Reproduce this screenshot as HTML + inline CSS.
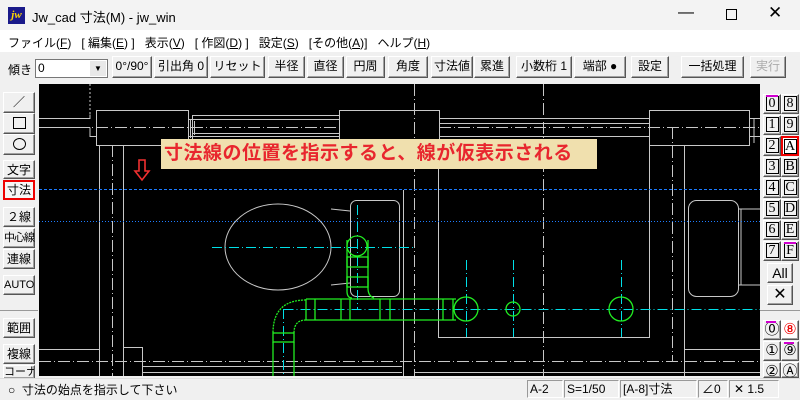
<!DOCTYPE html>
<html><head><meta charset="utf-8"><style>
*{margin:0;padding:0;box-sizing:border-box}
body{width:800px;height:400px;overflow:hidden;background:#f0f0f0;font-family:"Liberation Sans","Noto Sans CJK JP",sans-serif;position:relative;font-size:12px;color:#000}
.abs{position:absolute}
.btn{position:absolute;background:#f0f0f0;border:1px solid;border-color:#fff #555 #555 #fff;box-shadow:inset -1px -1px #a0a0a0;text-align:center;font-size:12px;white-space:nowrap;line-height:19px}
.lb{left:3px;width:32px}
.rb{width:18px;height:20px;font-family:"Liberation Serif",serif;font-size:14px;line-height:18px}
.rb span{display:inline-block;border:1px solid #000;width:13px;height:15px;line-height:14px;margin-top:1px}
</style></head><body>
<div class="abs" style="left:0;top:0;width:800px;height:30px;background:#f3f3f3"></div>
<div class="abs" style="left:8px;top:7px;width:17px;height:17px;background:#1a1a8a;color:#ffd800;font:bold italic 11px 'Liberation Serif',serif;line-height:16px;text-align:center">jw</div>
<div class="abs" style="left:32px;top:7px;font-size:13px">Jw_cad 寸法(M) - jw_win</div>
<div class="abs" style="left:678px;top:4px;font-size:16px">—</div>
<div class="abs" style="left:726px;top:9px;width:11px;height:11px;border:1px solid #000"></div>
<div class="abs" style="left:768px;top:3px;font-size:17px">✕</div>
<div class="abs" style="left:0;top:30px;width:800px;height:22px;background:#fff"></div>
<div class="abs" style="left:8px;top:34px;font-size:12px;word-spacing:0">ファイル(<u>F</u>)&nbsp;&nbsp;&nbsp;[ 編集(<u>E</u>) ]&nbsp;&nbsp;&nbsp;表示(<u>V</u>)&nbsp;&nbsp;&nbsp;[ 作図(<u>D</u>) ]&nbsp;&nbsp;&nbsp;設定(<u>S</u>)&nbsp;&nbsp;&nbsp;[その他(<u>A</u>)]&nbsp;&nbsp;&nbsp;ヘルプ(<u>H</u>)</div>
<div class="abs" style="left:8px;top:61px">傾き</div>
<div class="abs" style="left:35px;top:59px;width:73px;height:19px;background:#fff;border:1px solid #777;padding-left:2px;line-height:16px">0<span style="position:absolute;right:1px;top:1px;width:16px;height:15px;background:#e8e8e8;font-size:8px;line-height:15px;text-align:center">▼</span></div>
<div class="btn" style="left:112px;top:56px;width:40px;height:22px">0°/90°</div>
<div class="btn" style="left:154px;top:56px;width:54px;height:22px">引出角 0</div>
<div class="btn" style="left:210px;top:56px;width:55px;height:22px">リセット</div>
<div class="btn" style="left:268px;top:56px;width:37px;height:22px">半径</div>
<div class="btn" style="left:307px;top:56px;width:37px;height:22px">直径</div>
<div class="btn" style="left:346px;top:56px;width:39px;height:22px">円周</div>
<div class="btn" style="left:388px;top:56px;width:40px;height:22px">角度</div>
<div class="btn" style="left:431px;top:56px;width:42px;height:22px">寸法値</div>
<div class="btn" style="left:474px;top:56px;width:36px;height:22px">累進</div>
<div class="btn" style="left:516px;top:56px;width:56px;height:22px">小数桁 1</div>
<div class="btn" style="left:574px;top:56px;width:52px;height:22px">端部 ●</div>
<div class="btn" style="left:631px;top:56px;width:38px;height:22px">設定</div>
<div class="btn" style="left:681px;top:56px;width:63px;height:22px">一括処理</div>
<div class="btn" style="left:750px;top:56px;width:36px;height:22px;color:#aaa">実行</div>

<!-- left toolbar -->
<div class="btn lb" style="top:92px;height:21px">／</div>
<div class="btn lb" style="top:113px;height:21px"><span style="display:inline-block;width:13px;height:12px;border:1px solid #000;margin-top:3px"></span></div>
<div class="btn lb" style="top:134px;height:21px"><span style="display:inline-block;width:13px;height:12px;border:1px solid #000;border-radius:50%;margin-top:3px"></span></div>
<div class="btn lb" style="top:160px;height:19px">文字</div>
<div class="btn lb" style="top:180px;height:20px;border:2px solid #e00;box-shadow:none;line-height:16px;background:#f6f6f6">寸法</div>
<div class="btn lb" style="top:207px;height:20px">２線</div>
<div class="btn lb" style="top:228px;height:20px;font-size:11px;letter-spacing:-1px">中心線</div>
<div class="btn lb" style="top:249px;height:20px">連線</div>
<div class="btn lb" style="top:275px;height:20px;font-size:11px">AUTO</div>
<div class="abs" style="left:0;top:310px;width:38px;border-top:1px solid #999"></div>
<div class="btn lb" style="top:318px;height:20px">範囲</div>
<div class="btn lb" style="top:344px;height:20px">複線</div>
<div class="btn lb" style="top:365px;height:14px;line-height:13px;overflow:hidden;font-size:11px">コーナー</div>

<!-- canvas -->
<svg class="abs" style="left:39px;top:84px" width="721" height="292" viewBox="39 84 721 292">
<rect x="39" y="84" width="721" height="292" fill="#000"/>
<g stroke="#c8c8c8" stroke-width="1" fill="none">
<path d="M90 84v30" stroke-dasharray="2 2"/>
<path d="M39 118.5h51v-4M39 127.5h51M90 127.5v9h6"/>
<rect x="96.5" y="110.5" width="92" height="35"/>
<path d="M99.5 145v231M123.5 145v231"/>
<path d="M188 119.5h151M188 136.5h151M192 115.5h147M192 133.5h147M190.5 119v19M194.5 121v14M192.5 115v24"/>
<rect x="339.5" y="110.5" width="100" height="29"/>
<path d="M439 118.5h210M439 123.5h210M439 136.5h210"/>
<rect x="649.5" y="110.5" width="100" height="35"/>
<path d="M649.5 145v192.5H438.5V139M684.5 145.5V376M684 349.5h76M749 118.5h11M749 136.5h11M754 118v25"/>
<path d="M403.5 190v186M39 349.5h60M123 347.5h19M142.5 347v29M142 366.5h260M142 372.5h260M415 372.5h345"/>
<rect x="688.5" y="200.5" width="50" height="96" rx="8"/>
<path d="M738 209h22M738 285h22M741 209v76"/>
<ellipse cx="278" cy="247" rx="53" ry="43"/>
<path d="M331 209l19 2M331 285l19 -2"/>
<rect x="350.5" y="200.5" width="49" height="96" rx="6"/>
</g>
<g stroke="#c8c8c8" stroke-width="1" fill="none" stroke-dasharray="12 3 1 3">
<path d="M39 127.5h300M439 127.5h321M39 361.5h721M112.5 145v231M414.5 84v292M543.5 84v292M672.5 127v235"/>
</g>
<path d="M39 189.5h721" stroke="#1e7cff" stroke-width="1" stroke-dasharray="3 2"/>
<path d="M39 221.5h721" stroke="#1e7cff" stroke-width="1" stroke-dasharray="1 2"/>
<g stroke="#00e0e8" stroke-width="1" stroke-dasharray="10 3 1 3" fill="none">
<path d="M212 247.5h202M357.5 205v104M283.5 309.5h477M466.5 260v77M513.5 260v77M621.5 260v77M283.5 309v67"/>
</g>
<g stroke="#22ee22" stroke-width="1.3" fill="none">
<circle cx="357" cy="246" r="10"/>
<rect x="347" y="257" width="21" height="10"/>
<rect x="347" y="277" width="21" height="10"/>
<path d="M347 240v51q0 7 5 7M368 240v48q0 8 6 10"/>
<path d="M306 299h150M306 320h150M306 299v21M315 299v21M341 299v21M350 299v21M380 299v21M390 299v21M443 299v21M453 299v21"/>
<path d="M306 300q-33 0-33 33M306 320q-12 0-12 13" stroke-dasharray="2 1"/>
<rect x="273" y="333" width="21" height="9"/>
<path d="M273 342v34M294 342v34"/>
<circle cx="466" cy="309" r="12"/>
<circle cx="513" cy="309" r="7"/>
<circle cx="621" cy="309" r="12"/>
</g>
<path d="M139 160h6v11h4l-7 9-7-9h4z" fill="none" stroke="#f03030" stroke-width="1.6"/>
</svg>
<div class="abs" style="left:161px;top:139px;width:436px;height:30px;background:#f0e0ae;color:#e8262e;font-weight:bold;font-size:19px;line-height:30px;padding-left:3px;letter-spacing:0.5px;white-space:nowrap">寸法線の位置を指示すると、線が仮表示される</div>

<!-- right panel -->
<div class="abs" style="left:760px;top:84px;width:40px;height:294px;background:#f0f0f0"></div>
<div class="btn rb" style="left:763px;top:94px"><span>0</span></div><div class="btn rb" style="left:781px;top:94px"><span>8</span></div>
<div class="abs" style="left:766px;top:95px;width:12px;height:2px;background:#d000d0"></div>
<div class="btn rb" style="left:763px;top:115px"><span>1</span></div><div class="btn rb" style="left:781px;top:115px"><span>9</span></div>
<div class="btn rb" style="left:763px;top:136px"><span>2</span></div><div class="btn rb" style="left:781px;top:136px;border:2px solid #e00;box-shadow:none;background:#fff"><span style="margin-top:0">A</span></div>
<div class="btn rb" style="left:763px;top:157px"><span>3</span></div><div class="btn rb" style="left:781px;top:157px"><span>B</span></div>
<div class="btn rb" style="left:763px;top:178px"><span>4</span></div><div class="btn rb" style="left:781px;top:178px"><span>C</span></div>
<div class="btn rb" style="left:763px;top:199px"><span>5</span></div><div class="btn rb" style="left:781px;top:199px"><span>D</span></div>
<div class="btn rb" style="left:763px;top:220px"><span>6</span></div><div class="btn rb" style="left:781px;top:220px"><span>E</span></div>
<div class="btn rb" style="left:763px;top:241px"><span>7</span></div><div class="btn rb" style="left:781px;top:241px"><span>F</span></div>
<div class="abs" style="left:784px;top:242px;width:12px;height:2px;background:#d000d0"></div>
<div class="btn" style="left:767px;top:263px;width:26px;height:20px;font-size:14px;line-height:18px">All</div>
<div class="btn" style="left:767px;top:285px;width:26px;height:20px;font-size:16px;line-height:18px">✕</div>
<div class="abs" style="left:760px;top:310px;width:40px;border-top:1px solid #999"></div>
<div class="btn rb" style="left:763px;top:320px;font-size:15px">⓪</div><div class="btn rb" style="left:781px;top:320px;font-size:15px;color:#e00;background:#fff">⑧</div>
<div class="btn rb" style="left:763px;top:341px;font-size:15px">①</div><div class="btn rb" style="left:781px;top:341px;font-size:15px">⑨</div>
<div class="btn rb" style="left:763px;top:362px;font-size:15px;height:16px;overflow:hidden">②</div><div class="btn rb" style="left:781px;top:362px;font-size:15px;height:16px;overflow:hidden">Ⓐ</div>
<div class="abs" style="left:766px;top:321px;width:10px;height:2px;background:#d000d0"></div>
<div class="abs" style="left:784px;top:342px;width:10px;height:2px;background:#d000d0"></div>

<!-- status -->
<div class="abs" style="left:0;top:378px;width:800px;height:22px;background:#f0f0f0;border-top:1px solid #ddd"></div>
<div class="abs" style="left:8px;top:381px;font-size:12px">○&nbsp;&nbsp;寸法の始点を指示して下さい</div>
<div class="abs" style="left:527px;top:380px;width:36px;height:18px;border:1px solid;border-color:#999 #fff #fff #999;padding-left:2px;line-height:16px">A-2</div>
<div class="abs" style="left:564px;top:380px;width:55px;height:18px;border:1px solid;border-color:#999 #fff #fff #999;padding-left:2px;line-height:16px">S=1/50</div>
<div class="abs" style="left:620px;top:380px;width:77px;height:18px;border:1px solid;border-color:#999 #fff #fff #999;padding-left:2px;line-height:16px">[A-8]寸法</div>
<div class="abs" style="left:698px;top:380px;width:30px;height:18px;border:1px solid;border-color:#999 #fff #fff #999;padding-left:3px;line-height:16px">∠0</div>
<div class="abs" style="left:729px;top:380px;width:50px;height:18px;border:1px solid;border-color:#999 #fff #fff #999;padding-left:4px;line-height:16px">✕ 1.5</div>
</body></html>
